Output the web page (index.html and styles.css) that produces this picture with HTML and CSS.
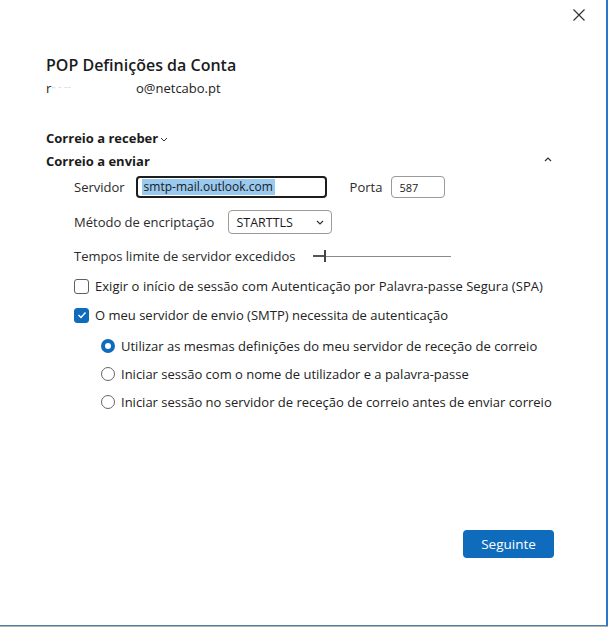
FILE: index.html
```html
<!DOCTYPE html>
<html lang="pt">
<head>
<meta charset="utf-8">
<title>POP Definições da Conta</title>
<link rel="stylesheet" href="styles.css">
</head>
<body>
<div class="window">
  <div class="topbar">
    <button class="close" aria-label="Fechar">
      <svg width="12" height="12" viewBox="0 0 12 12"><path d="M0.5 0.5 L11.5 11.5 M11.5 0.5 L0.5 11.5" stroke="#333" stroke-width="1.2" fill="none"/></svg>
    </button>
  </div>
  <div class="content">
    <h1 class="title">POP Definições da Conta</h1>
    <div class="email"><span class="redact">r<span class="faint">ᵔ  ⁻  ⁻⁻</span></span>o@netcabo.pt</div>

    <div class="section-head collapsed">Correio a receber<svg class="chev" width="8" height="5" viewBox="0 0 8 5"><path d="M1 1 L4 4 L7 1" stroke="#333" stroke-width="1" fill="none"/></svg></div>
    <div class="section-head open"><span>Correio a enviar</span><svg class="caret" width="8" height="5" viewBox="0 0 8 5"><path d="M1 4 L4 1 L7 4" stroke="#333" stroke-width="1.2" fill="none"/></svg></div>

    <div class="fields">
      <div class="row">
        <span class="label">Servidor</span>
        <div class="input server"><span class="sel">smtp-mail.outlook.com</span></div>
        <span class="label porta">Porta</span>
        <div class="input port">587</div>
      </div>
      <div class="row">
        <span class="label">Método de encriptação</span>
        <div class="select"><span>STARTTLS</span><svg width="8" height="5" viewBox="0 0 8 5"><path d="M1 1 L4 4 L7 1" stroke="#333" stroke-width="1.2" fill="none"/></svg></div>
      </div>
      <div class="row timeout">
        <span class="label">Tempos limite de servidor excedidos</span>
        <div class="slider"><span class="fill"></span><span class="thumb"></span><span class="track"></span></div>
      </div>
    </div>

    <div class="checks">
      <label class="check spa"><span class="box"></span>Exigir o início de sessão com Autenticação por Palavra-passe Segura (SPA)</label>
      <label class="check"><span class="box on"><svg width="10" height="8" viewBox="0 0 10 8"><path d="M1.5 4 L4 6.5 L8.5 1.5" stroke="#fff" stroke-width="1.4" fill="none"/></svg></span>O meu servidor de envio (SMTP) necessita de autenticação</label>
    </div>

    <div class="radios">
      <label class="radio"><span class="dot on"></span>Utilizar as mesmas definições do meu servidor de receção de correio</label>
      <label class="radio"><span class="dot"></span>Iniciar sessão com o nome de utilizador e a palavra-passe</label>
      <label class="radio"><span class="dot"></span>Iniciar sessão no servidor de receção de correio antes de enviar correio</label>
    </div>

    <div class="footer">
      <button class="primary">Seguinte</button>
    </div>
  </div>
</div>
</body>
</html>
```

FILE: styles.css
```css
html, body {
  margin: 0;
  padding: 0;
  background: #ffffff;
}
body {
  font-family: "Open Sans", "Noto Sans", sans-serif;
  color: #1b1b1b;
  width: 612px;
  height: 627px;
  overflow: hidden;
}
.window {
  width: 606px;
  height: 625px;
  border-right: 2px solid #2a78cc;
  border-bottom: 1px solid #4a7fb0;
  box-shadow: 0 1px 0 #b8b0a8;
  box-sizing: content-box;
  display: flex;
  flex-direction: column;
}
.topbar {
  display: flex;
  justify-content: flex-end;
  padding: 9px 21px 0 0;
  height: 14px;
}
.close {
  border: 0;
  background: none;
  padding: 0;
  width: 12px;
  height: 12px;
  display: flex;
}
.content {
  padding-left: 46px;
  padding-right: 52px;
  display: flex;
  flex-direction: column;
  flex: 1;
  white-space: nowrap;
}
.title {
  margin: 31px 0 0 0;
  font-size: 16px;
  font-weight: 600;
  line-height: 22px;
  color: #1b1b1b;
}
.email {
  font-size: 13px;
  line-height: 18px;
  margin-top: 3px;
  color: #222;
}
.redact {
  display: inline-block;
  width: 90px;
}
.faint {
  color: #c8c8c8;
  font-size: 10px;
}
.section-head {
  font-size: 13px;
  font-weight: 700;
  line-height: 20px;
  display: flex;
  align-items: center;
}
.section-head.collapsed {
  margin-top: 30px;
}
.section-head.open {
  margin-top: 3px;
  justify-content: space-between;
}
.chev {
  margin-left: 2px;
  margin-top: 2px;
}
.caret {
  margin-right: 2px;
  margin-top: -4px;
}
.fields {
  padding-left: 28px;
  display: flex;
  flex-direction: column;
}
.row {
  display: flex;
  align-items: center;
  font-size: 13px;
}
.row:first-child {
  margin-top: 5px;
}
.row + .row {
  margin-top: 12px;
}
.label {
  color: #2a2a2a;
}
.input {
  box-sizing: border-box;
  height: 22px;
  border-radius: 4px;
  display: flex;
  align-items: center;
}
.input.server {
  width: 191px;
  margin-left: 11px;
  border: 2px solid #1d1d1d;
  padding-left: 4px;
  font-size: 12px;
}
.sel {
  background: #99c9ef;
  color: #1a1a1a;
  padding: 0 2px;
  line-height: 16px;
}
.porta {
  margin-left: 23px;
}
.input.port {
  width: 54px;
  margin-left: 9px;
  border: 1px solid #9a9a9a;
  padding-left: 7px;
  font-size: 11px;
}
.select {
  box-sizing: border-box;
  width: 104px;
  height: 24px;
  margin-left: 14px;
  border: 1px solid #9a9a9a;
  border-radius: 4px;
  display: flex;
  align-items: center;
  justify-content: space-between;
  padding: 0 7px 0 7px;
  font-size: 12.5px;
}
.row.timeout {
  margin-top: 13px;
}
.slider {
  position: relative;
  margin-left: 17px;
  width: 138px;
  height: 14px;
  display: flex;
  align-items: center;
}
.slider .fill {
  width: 11px;
  height: 2px;
  background: #555;
}
.slider .thumb {
  width: 2px;
  height: 12px;
  background: #444;
}
.slider .track {
  flex: 1;
  height: 1px;
  background: #8a8a8a;
}
.checks {
  margin-top: 11px;
  padding-left: 28px;
  display: flex;
  flex-direction: column;
  gap: 9px;
}
.check {
  display: flex;
  align-items: center;
  font-size: 13px;
  line-height: 20px;
  color: #222;
}
.check.spa {
  letter-spacing: 0.04px;
}
.box {
  box-sizing: border-box;
  width: 15px;
  height: 15px;
  border: 1px solid #5f5f5f;
  border-radius: 3px;
  margin-right: 6px;
  display: flex;
  align-items: center;
  justify-content: center;
}
.box.on {
  background: #0f6cbd;
  border-color: #0f6cbd;
}
.radios {
  margin-top: 11px;
  padding-left: 55px;
  display: flex;
  flex-direction: column;
  gap: 8px;
}
.radio {
  display: flex;
  align-items: center;
  font-size: 13px;
  line-height: 20px;
  color: #222;
}
.dot {
  box-sizing: border-box;
  width: 14px;
  height: 14px;
  border: 1px solid #666;
  border-radius: 50%;
  margin-right: 6px;
}
.dot.on {
  border: 4px solid #0f6cbd;
}
.footer {
  margin-top: auto;
  margin-bottom: 67px;
  display: flex;
  justify-content: flex-end;
}
.primary {
  width: 91px;
  height: 28px;
  border: 0;
  border-radius: 4px;
  background: #0f6cbd;
  color: #fff;
  font-family: "Open Sans", "Noto Sans", sans-serif;
  font-size: 13.5px;
  padding: 0;
}
```
